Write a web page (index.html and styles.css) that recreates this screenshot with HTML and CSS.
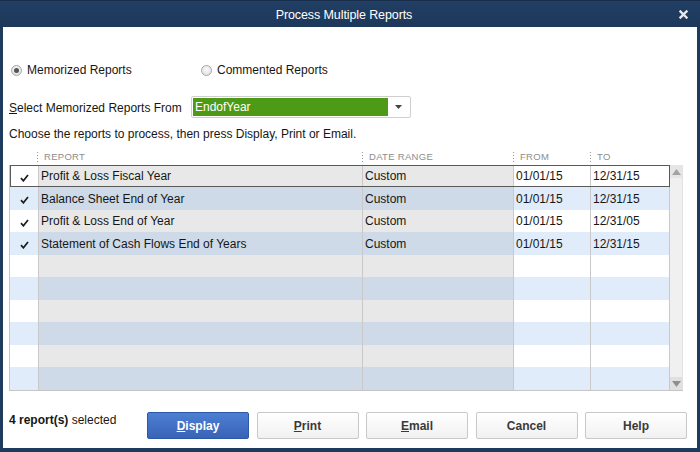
FILE: index.html
```html
<!DOCTYPE html>
<html>
<head>
<meta charset="utf-8">
<link rel="stylesheet" href="styles.css">
</head>
<body>
<div class="window">
  <div class="titlebar">
    <span class="title">Process Multiple Reports</span>
    <svg class="close" width="9" height="9" viewBox="0 0 9 9"><path d="M1.5 1.5 L7.5 7.5 M7.5 1.5 L1.5 7.5" stroke="#e6e9ee" stroke-width="2.4" stroke-linecap="square"/></svg>
  </div>
  <div class="content">
    <div class="radios">
      <label class="radio"><span class="dot on"></span>Memorized Reports</label>
      <label class="radio"><span class="dot"></span>Commented Reports</label>
    </div>
    <div class="select-row">
      <span class="select-label"><u>S</u>elect Memorized Reports From</span>
      <div class="combo">
        <span class="combo-value">EndofYear</span>
        <span class="combo-arrow"><svg width="7" height="4" viewBox="0 0 7 4"><path d="M0 0 H7 L3.5 4 Z" fill="#444"/></svg></span>
      </div>
    </div>
    <div class="hint">Choose the reports to process, then press Display, Print or Email.</div>
    <div class="thead">
      <div class="th"></div>
      <div class="th"><span class="sep"></span>REPORT</div>
      <div class="th"><span class="sep"></span>DATE RANGE</div>
      <div class="th"><span class="sep"></span>FROM</div>
      <div class="th"><span class="sep"></span>TO</div>
    </div>
    <div class="table">
      <div class="rows">
        <div class="row sel">
          <div class="c chk"><svg width="9" height="8" viewBox="0 0 9 8"><path d="M1 4.2 L3.4 6.8 L8 1" fill="none" stroke="#1c1c1c" stroke-width="1.7"/></svg></div>
          <div class="c g">Profit &amp; Loss Fiscal Year</div>
          <div class="c g">Custom</div>
          <div class="c w">01/01/15</div>
          <div class="c w">12/31/15</div>
        </div>
        <div class="row">
          <div class="c chk"><svg width="9" height="8" viewBox="0 0 9 8"><path d="M1 4.2 L3.4 6.8 L8 1" fill="none" stroke="#1c1c1c" stroke-width="1.7"/></svg></div>
          <div class="c g">Balance Sheet End of Year</div>
          <div class="c g">Custom</div>
          <div class="c w">01/01/15</div>
          <div class="c w">12/31/15</div>
        </div>
        <div class="row">
          <div class="c chk"><svg width="9" height="8" viewBox="0 0 9 8"><path d="M1 4.2 L3.4 6.8 L8 1" fill="none" stroke="#1c1c1c" stroke-width="1.7"/></svg></div>
          <div class="c g">Profit &amp; Loss End of Year</div>
          <div class="c g">Custom</div>
          <div class="c w">01/01/15</div>
          <div class="c w">12/31/05</div>
        </div>
        <div class="row">
          <div class="c chk"><svg width="9" height="8" viewBox="0 0 9 8"><path d="M1 4.2 L3.4 6.8 L8 1" fill="none" stroke="#1c1c1c" stroke-width="1.7"/></svg></div>
          <div class="c g">Statement of Cash Flows End of Years</div>
          <div class="c g">Custom</div>
          <div class="c w">01/01/15</div>
          <div class="c w">12/31/15</div>
        </div>
        <div class="row"><div class="c chk"></div><div class="c g"></div><div class="c g"></div><div class="c w"></div><div class="c w"></div></div>
        <div class="row"><div class="c chk"></div><div class="c g"></div><div class="c g"></div><div class="c w"></div><div class="c w"></div></div>
        <div class="row"><div class="c chk"></div><div class="c g"></div><div class="c g"></div><div class="c w"></div><div class="c w"></div></div>
        <div class="row"><div class="c chk"></div><div class="c g"></div><div class="c g"></div><div class="c w"></div><div class="c w"></div></div>
        <div class="row"><div class="c chk"></div><div class="c g"></div><div class="c g"></div><div class="c w"></div><div class="c w"></div></div>
        <div class="row"><div class="c chk"></div><div class="c g"></div><div class="c g"></div><div class="c w"></div><div class="c w"></div></div>
      </div>
      <div class="scrollbar">
        <div class="sb-btn"><svg width="9" height="6" viewBox="0 0 9 6"><path d="M0 6 H9 L4.5 0 Z" fill="#a3a3a3"/></svg></div>
        <div class="sb-track"></div>
        <div class="sb-btn dn"><svg width="9" height="6" viewBox="0 0 9 6"><path d="M0 0 H9 L4.5 6 Z" fill="#8f8f8f"/></svg></div>
      </div>
    </div>
    <div class="footer">
      <div class="status"><b>4 report(s)</b> selected</div>
      <div class="buttons">
        <button class="btn primary"><u>D</u>isplay</button>
        <button class="btn"><u>P</u>rint</button>
        <button class="btn"><u>E</u>mail</button>
        <button class="btn">Cancel</button>
        <button class="btn">Help</button>
      </div>
    </div>
  </div>
</div>
</body>
</html>
```

FILE: styles.css
```css
* { box-sizing: border-box; }
html, body { margin: 0; padding: 0; }
body {
  width: 700px;
  height: 452px;
  overflow: hidden;
  font-family: "Liberation Sans", Arial, sans-serif;
  font-size: 12px;
  color: #161616;
  background: #1e3a5c;
}
.window {
  width: 700px;
  height: 452px;
  display: flex;
  flex-direction: column;
  background: #1e3a5c;
}
.titlebar {
  height: 27px;
  flex: none;
  display: flex;
  align-items: center;
  justify-content: center;
  background: linear-gradient(#213f64, #1d3859);
  border-top: 1px solid #172d49;
  padding: 0 12px 0 0;
  position: relative;
}
.title {
  color: #ffffff;
  font-size: 12.5px;
  letter-spacing: -0.1px;
  margin-top: 2px;
}
.close {
  position: absolute;
  right: 12px;
  top: 9px;
}
.content {
  flex: 1;
  margin: 0 3px 4px 3px;
  background: #ffffff;
  padding: 35px 10px 0 6px;
  display: flex;
  flex-direction: column;
}
.radios {
  display: flex;
  height: 16px;
  align-items: center;
  padding-left: 2px;
}
.radio {
  display: flex;
  align-items: center;
  gap: 5px;
  width: 190px;
}
.dot {
  width: 11px;
  height: 11px;
  border-radius: 50%;
  border: 1px solid #a7a7a7;
  background: radial-gradient(circle at 50% 40%, #fafafa, #dadada);
  display: inline-flex;
  align-items: center;
  justify-content: center;
}
.dot.on::after {
  content: "";
  width: 5px;
  height: 5px;
  border-radius: 50%;
  background: #555;
}
.select-row {
  margin-top: 18px;
  display: flex;
  align-items: center;
  height: 22px;
}
.select-label {
  width: 182px;
  padding-top: 1px;
}
.combo {
  width: 220px;
  height: 22px;
  border: 1px solid #cfcfcf;
  border-radius: 2px;
  display: flex;
  padding: 1px;
  background: #fff;
}
.combo-value {
  flex: 1;
  background: #4d9a17;
  color: #ffffff;
  padding-left: 2px;
  line-height: 18px;
}
.combo-arrow {
  width: 21px;
  display: flex;
  align-items: center;
  justify-content: center;
}
.hint {
  margin-top: 8px;
  line-height: 16px;
}
.thead {
  margin-top: 6px;
  margin-left: 1px;
  height: 17px;
  display: grid;
  grid-template-columns: 27px 325px 151px 77px 80px;
  align-items: center;
  font-size: 9.5px;
  color: #8d8d8d;
  letter-spacing: 0.3px;
}
.th {
  display: flex;
  align-items: center;
}
.sep {
  width: 1px;
  height: 10px;
  margin-right: 6px;
  background: repeating-linear-gradient(#9a9a9a 0 1px, transparent 1px 3px);
}
.table {
  width: 674px;
  display: flex;
  border-left: 1px solid #c6c6c6;
  border-bottom: 1px solid #c6c6c6;
}
.rows {
  width: 660px;
  display: flex;
  flex-direction: column;
}
.row {
  display: grid;
  grid-template-columns: 29px 324px 151px 77px 79px;
  height: 22px;
}
.row:nth-child(even) { height: 23px; }
.row.sel {
  outline: 1px solid #5a5a5a;
  outline-offset: -1px;
  box-shadow: inset 0 0 0 2px rgba(90, 90, 90, 0.35);
}
.c {
  border-right: 1px solid #c9c9c9;
  display: flex;
  align-items: center;
  padding-left: 2px;
  white-space: nowrap;
}
.c.chk {
  justify-content: center;
  padding: 3px 0 0 0;
  background: #ffffff;
}
.c.g { background: #e8e8e8; }
.c.w { background: #ffffff; }
.row:nth-child(even) .c.chk,
.row:nth-child(even) .c.w { background: #e1ecfb; }
.row:nth-child(even) .c.g { background: #cfdae8; }
.scrollbar {
  width: 14px;
  display: flex;
  flex-direction: column;
  background: #f0f0f0;
  border-right: 1px solid #e2e2e2;
}
.sb-btn {
  height: 13px;
  display: flex;
  align-items: center;
  justify-content: center;
  background: #e6e6e6;
}
.sb-btn.dn { background: #e0e0e0; }
.sb-track { flex: 1; }
.footer {
  margin-top: 21px;
  display: flex;
  justify-content: space-between;
  align-items: flex-start;
}
.status {
  padding-left: 0;
  line-height: 16px;
}
.buttons {
  display: flex;
  gap: 7.5px;
}
.btn {
  width: 102px;
  height: 27px;
  font-family: "Liberation Sans", Arial, sans-serif;
  font-size: 12px;
  font-weight: bold;
  color: #3a3a3a;
  border: 1px solid #c8c8c8;
  border-radius: 2px;
  background: linear-gradient(#ffffff, #f1f1f1);
  padding: 0;
}
.btn u { text-decoration-thickness: 1px; }
.btn.primary {
  color: #ffffff;
  border-color: #2c58a8;
  background: linear-gradient(#4c7fd3, #3963b6);
}
```
